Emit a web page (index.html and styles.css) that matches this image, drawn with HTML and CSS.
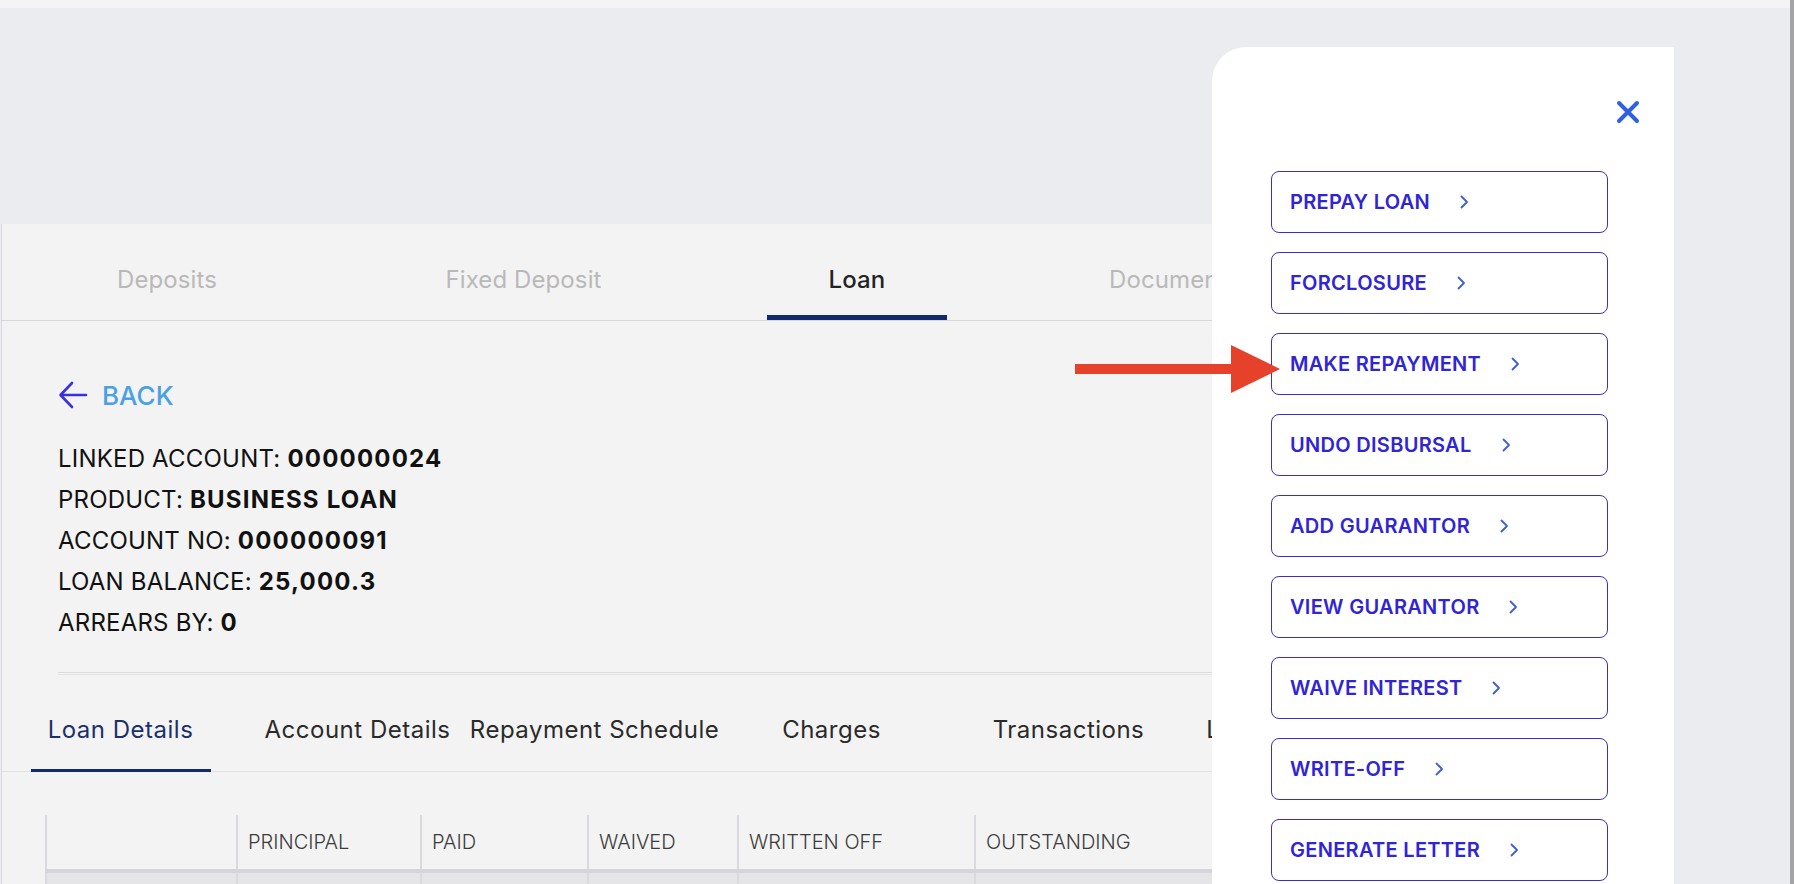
FILE: index.html
```html
<!DOCTYPE html>
<html>
<head>
    <title>Loan Account</title>
    <link rel="stylesheet" href="styles.css">
</head>
<body>
<div class="app">
    <div class="topbar"></div>

    <section class="card">
        <div class="tabs">
            <div class="tab">Deposits</div>
            <div class="tab">Fixed Deposit</div>
            <div class="tab active">Loan</div>
            <div class="tab">Documents</div>
        </div>

        <div class="loan-body">
            <a class="back" href="#">
                <svg width="30" height="28" viewBox="0 0 30 28">
                    <path d="M28 14H3M14 2L2.5 14L14 26" fill="none" stroke="#3b30e0" stroke-width="2.6" stroke-linecap="round" stroke-linejoin="round"/>
                </svg>
                <span>BACK</span>
            </a>

            <div class="info">
                <div>LINKED ACCOUNT: <b>000000024</b></div>
                <div>PRODUCT: <b>BUSINESS LOAN</b></div>
                <div>ACCOUNT NO: <b>000000091</b></div>
                <div>LOAN BALANCE: <b>25,000.3</b></div>
                <div>ARREARS BY: <b>0</b></div>
            </div>

            <div class="divider"></div>
        </div>

        <div class="subtabs">
            <div class="subtab active">Loan Details</div>
            <div class="subtab">Account Details</div>
            <div class="subtab">Repayment Schedule</div>
            <div class="subtab">Charges</div>
            <div class="subtab">Transactions</div>
            <div class="subtab">Loan Documents</div>
        </div>

        <table class="summary">
            <thead>
                <tr>
                    <th></th>
                    <th>PRINCIPAL</th>
                    <th>PAID</th>
                    <th>WAIVED</th>
                    <th>WRITTEN OFF</th>
                    <th>OUTSTANDING</th>
                </tr>
            </thead>
            <tbody>
                <tr>
                    <td></td><td></td><td></td><td></td><td></td><td></td>
                </tr>
            </tbody>
        </table>
    </section>

    <aside class="actions">
        <div class="actions-head">
            <button class="close" aria-label="Close">
                <svg width="24" height="24" viewBox="0 0 24 24">
                    <path d="M3 3L21 21M21 3L3 21" stroke="#2f5fe3" stroke-width="4" stroke-linecap="round"/>
                </svg>
            </button>
        </div>
        <div class="action-list">
            <button class="action">PREPAY LOAN <i class="chev"><svg width="9" height="14" viewBox="0 0 9 14"><path d="M1.5 1.5L7 7L1.5 12.5" fill="none" stroke="#3d5fd6" stroke-width="1.8" stroke-linecap="round" stroke-linejoin="round"/></svg></i></button>
            <button class="action">FORCLOSURE <i class="chev"><svg width="9" height="14" viewBox="0 0 9 14"><path d="M1.5 1.5L7 7L1.5 12.5" fill="none" stroke="#3d5fd6" stroke-width="1.8" stroke-linecap="round" stroke-linejoin="round"/></svg></i></button>
            <button class="action">MAKE REPAYMENT <i class="chev"><svg width="9" height="14" viewBox="0 0 9 14"><path d="M1.5 1.5L7 7L1.5 12.5" fill="none" stroke="#3d5fd6" stroke-width="1.8" stroke-linecap="round" stroke-linejoin="round"/></svg></i></button>
            <button class="action">UNDO DISBURSAL <i class="chev"><svg width="9" height="14" viewBox="0 0 9 14"><path d="M1.5 1.5L7 7L1.5 12.5" fill="none" stroke="#3d5fd6" stroke-width="1.8" stroke-linecap="round" stroke-linejoin="round"/></svg></i></button>
            <button class="action">ADD GUARANTOR <i class="chev"><svg width="9" height="14" viewBox="0 0 9 14"><path d="M1.5 1.5L7 7L1.5 12.5" fill="none" stroke="#3d5fd6" stroke-width="1.8" stroke-linecap="round" stroke-linejoin="round"/></svg></i></button>
            <button class="action">VIEW GUARANTOR <i class="chev"><svg width="9" height="14" viewBox="0 0 9 14"><path d="M1.5 1.5L7 7L1.5 12.5" fill="none" stroke="#3d5fd6" stroke-width="1.8" stroke-linecap="round" stroke-linejoin="round"/></svg></i></button>
            <button class="action">WAIVE INTEREST <i class="chev"><svg width="9" height="14" viewBox="0 0 9 14"><path d="M1.5 1.5L7 7L1.5 12.5" fill="none" stroke="#3d5fd6" stroke-width="1.8" stroke-linecap="round" stroke-linejoin="round"/></svg></i></button>
            <button class="action">WRITE-OFF <i class="chev"><svg width="9" height="14" viewBox="0 0 9 14"><path d="M1.5 1.5L7 7L1.5 12.5" fill="none" stroke="#3d5fd6" stroke-width="1.8" stroke-linecap="round" stroke-linejoin="round"/></svg></i></button>
            <button class="action">GENERATE LETTER <i class="chev"><svg width="9" height="14" viewBox="0 0 9 14"><path d="M1.5 1.5L7 7L1.5 12.5" fill="none" stroke="#3d5fd6" stroke-width="1.8" stroke-linecap="round" stroke-linejoin="round"/></svg></i></button>
        </div>
    </aside>

    <!-- pointer to the action -->
    <svg class="pointer" width="206" height="50" viewBox="0 0 206 50">
        <rect x="0" y="19" width="160" height="10" fill="#e6412a"/>
        <polygon points="156,0 205,24 156,48" fill="#e6412a"/>
    </svg>
</div>
</body>
</html>
```

FILE: styles.css
```css
/* General */
body {
    margin: 0;
    font-family: Inter, 'Noto Sans', Arial, sans-serif;
    color: #1c1c1c;
}

.app {
    position: relative;
    width: 1790px;
    height: 884px;
    overflow: hidden;
    background-color: #ebecf0;
    border-right: 4px solid #a4a4a6;
}

.topbar {
    height: 8px;
    background-color: #f4f4f5;
}

/* Main card */
.card {
    margin: 216px 0 0 1px;
    width: 1560px;
    height: 660px;
    background-color: #f3f3f3;
    border-left: 1px solid #dadade;
}

.tabs {
    display: grid;
    grid-template-columns: 330px 383px 284px 350px;
    height: 96px;
    border-bottom: 1px solid #d8d8dc;
}

.tab {
    position: relative;
    display: flex;
    align-items: center;
    justify-content: center;
    padding-top: 14px;
    font-size: 24px;
    letter-spacing: 0.1px;
    color: #b9b9b9;
}

.tab.active {
    color: #232323;
    font-weight: 500;
}

.tab.active::after {
    content: '';
    position: absolute;
    left: 50%;
    bottom: 0;
    width: 180px;
    height: 5px;
    margin-left: -90px;
    background-color: #12296b;
}

/* Account summary */
.loan-body {
    padding: 58px 0 0 56px;
}

.back {
    display: flex;
    align-items: center;
    gap: 14px;
    height: 32px;
    text-decoration: none;
}

.back span {
    font-size: 26px;
    font-weight: 500;
    color: #4aa0e6;
}

.info {
    margin-top: 27px;
    font-size: 24px;
    line-height: 41px;
    letter-spacing: 0.2px;
    color: #111;
}

.info b {
    font-weight: 700;
    letter-spacing: 1.2px;
}

.divider {
    margin-top: 29px;
    height: 1px;
    border-top: 1px solid #dcdcdc;
    border-bottom: 1px solid #e2e2e2;
}

/* Sub tabs */
.subtabs {
    display: flex;
    height: 96px;
    border-bottom: 1px solid #e1e1e4;
}

.subtab {
    position: relative;
    flex: 0 0 237px;
    min-width: 0;
    display: flex;
    align-items: center;
    justify-content: center;
    padding-top: 13px;
    font-size: 24px;
    letter-spacing: 0.5px;
    color: #2a2a2a;
    white-space: nowrap;
}

.subtab.active {
    color: #1b2f6d;
}

.subtab.active::after {
    content: '';
    position: absolute;
    left: 50%;
    bottom: -1px;
    width: 180px;
    height: 3px;
    margin-left: -90px;
    background-color: #12296b;
}

/* Table */
.summary {
    margin: 43px 0 0 43px;
    border-collapse: collapse;
    table-layout: fixed;
}

.summary th {
    height: 54px;
    padding: 0 0 0 10px;
    text-align: left;
    font-size: 20px;
    font-weight: 300;
    color: #3b3b3b;
    border-left: 2px solid #dadade;
    border-bottom: 4px solid #d6d6da;
}

.summary th:nth-child(1) { width: 179px; }
.summary th:nth-child(2) { width: 172px; }
.summary th:nth-child(3) { width: 155px; }
.summary th:nth-child(4) { width: 138px; }
.summary th:nth-child(5) { width: 225px; }
.summary th:nth-child(6) { width: 300px; }

.summary td {
    height: 50px;
    background-color: #e5e5e8;
    border-left: 2px solid #dadade;
}

/* Arrow pointing at the action */
.pointer {
    position: absolute;
    left: 1075px;
    top: 345px;
}

/* Action panel */
.actions {
    position: absolute;
    top: 47px;
    left: 1212px;
    width: 462px;
    bottom: 0;
    background-color: #fff;
    border-top-left-radius: 34px;
}

.actions-head {
    display: flex;
    justify-content: flex-end;
    padding: 53px 34px 0 0;
}

.close {
    width: 24px;
    height: 24px;
    padding: 0;
    border: none;
    background: none;
    cursor: pointer;
}

.action-list {
    display: flex;
    flex-direction: column;
    gap: 19px;
    margin: 47px 0 0 59px;
}

.action {
    display: flex;
    align-items: center;
    gap: 30px;
    width: 337px;
    height: 62px;
    padding: 0 0 0 18px;
    background-color: #fff;
    border: 1.5px solid #3a2fc8;
    border-radius: 8px;
    font-family: Inter, 'Noto Sans', Arial, sans-serif;
    font-size: 20px;
    font-weight: 600;
    letter-spacing: 0.3px;
    color: #2f24d6;
    cursor: pointer;
}

.chev {
    display: flex;
}
```
